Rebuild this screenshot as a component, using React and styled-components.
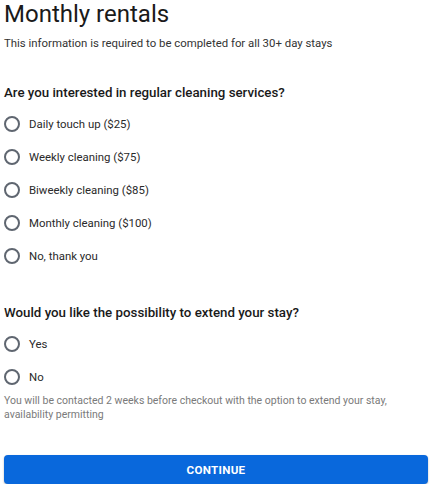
import React from "react";
import styled, { createGlobalStyle } from "styled-components";

const Global = createGlobalStyle`
  html, body { margin: 0; padding: 0; background: #fff; }
  body { font-family: Roboto, "Noto Sans", Arial, sans-serif; color: #212121; }
`;

const Page = styled.div`
  padding: 0 4px;
  display: flex;
  flex-direction: column;
`;

const Title = styled.h1`
  margin: 0;
  font-size: 24px;
  line-height: 28px;
  font-weight: 400;
  color: #1a1a1a;
`;

const Subtitle = styled.p`
  margin: 7px 0 0;
  font-size: 11.4px;
  line-height: 16px;
  color: #333;
`;

const Section = styled.fieldset`
  border: 0;
  margin: ${(p) => p.$top}px 0 0;
  padding: 0;
  display: flex;
  flex-direction: column;
`;

const Question = styled.legend`
  padding: 0;
  margin: 0 0 4px;
  font-size: 13.3px;
  line-height: 20px;
  font-weight: 500;
  color: #1a1a1a;
`;

const Option = styled.label`
  display: flex;
  align-items: center;
  gap: 9px;
  height: 33px;
  font-size: 11.4px;
  color: #2a2a2a;
  cursor: pointer;
`;

const Circle = styled.span`
  width: 16px;
  height: 16px;
  box-sizing: border-box;
  border: 2px solid #5f6670;
  border-radius: 50%;
  flex: none;
`;

const Hint = styled.p`
  margin: 1px 0 0;
  font-size: 10.5px;
  line-height: 14px;
  color: #7a7a7a;
`;

const Button = styled.button`
  margin-top: 33px;
  height: 29px;
  width: 100%;
  border: 0;
  border-radius: 4px;
  background: #0968dc;
  color: #fff;
  font-family: Roboto, Arial, sans-serif;
  font-size: 11.6px;
  font-weight: 700;
  letter-spacing: 0.3px;
  box-shadow: 0 1px 2px rgba(0, 0, 0, 0.3);
`;

const cleaning = [
  "Daily touch up ($25)",
  "Weekly cleaning ($75)",
  "Biweekly cleaning ($85)",
  "Monthly cleaning ($100)",
  "No, thank you",
];

export default function App() {
  return (
    <Page>
      <Global />
      <Title>Monthly rentals</Title>
      <Subtitle>This information is required to be completed for all 30+ day stays</Subtitle>
      <Section $top={32}>
        <Question>Are you interested in regular cleaning services?</Question>
        {cleaning.map((c) => (
          <Option key={c}>
            <Circle />
            {c}
          </Option>
        ))}
      </Section>
      <Section $top={31}>
        <Question>Would you like the possibility to extend your stay?</Question>
        <Option>
          <Circle />
          Yes
        </Option>
        <Option>
          <Circle />
          No
        </Option>
        <Hint>
          You will be contacted 2 weeks before checkout with the option to extend your stay, availability permitting
        </Hint>
      </Section>
      <Button>CONTINUE</Button>
    </Page>
  );
}
